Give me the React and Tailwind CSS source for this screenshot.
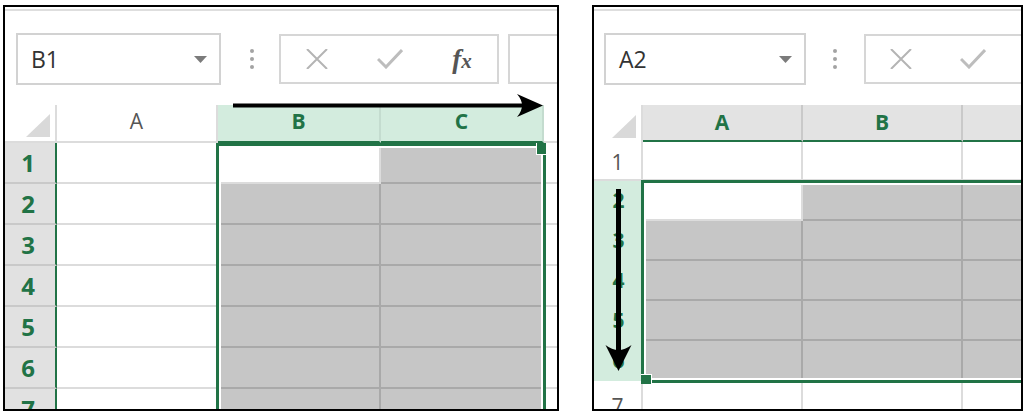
import React from 'react';

const font = { fontFamily: '"Open Sans", "Noto Sans", "Liberation Sans", sans-serif' };

function NameBox({ label, className }) {
  return (
    <div className={`flex h-[52px] shrink-0 items-center justify-between border-2 border-[#d2d2d2] bg-white pl-[13px] pr-[12px] ${className}`}>
      <span className="text-[23px] leading-none text-[#333]">{label}</span>
      <svg width="13" height="7" viewBox="0 0 13 7">
        <path d="M0 0 L13 0 L6.5 7 Z" fill="#7b7b7b" />
      </svg>
    </div>
  );
}

function Dots({ className }) {
  return (
    <div className={`flex shrink-0 flex-col gap-[4px] ${className}`}>
      <div className="h-[4px] w-[4px] rounded-full bg-[#a3a3a3]" />
      <div className="h-[4px] w-[4px] rounded-full bg-[#a3a3a3]" />
      <div className="h-[4px] w-[4px] rounded-full bg-[#a3a3a3]" />
    </div>
  );
}

function Cross() {
  return (
    <svg width="22" height="20" viewBox="0 0 22 20">
      <path d="M1 0 L21 20 M21 0 L1 20" stroke="#b4b4b4" strokeWidth="2" fill="none" />
    </svg>
  );
}

function Check() {
  return (
    <svg width="26" height="20" viewBox="0 0 26 20">
      <path d="M1 10 L9 18 L25 1" stroke="#bdbdbd" strokeWidth="3" fill="none" />
    </svg>
  );
}

function Triangle({ className }) {
  return (
    <svg className={`absolute ${className}`} width="24" height="23" viewBox="0 0 24 23">
      <path d="M24 0 L24 23 L0 23 Z" fill="#d9d9d9" />
    </svg>
  );
}

function LeftPanel() {
  const rows = [1, 2, 3, 4, 5, 6, 7];
  return (
    <div className="relative ml-[3px] mt-[5px] h-[406px] w-[556px] shrink-0 overflow-hidden border-2 border-black bg-white">
      <div className="mt-[2px] h-[2px] bg-[#dedede]" />

      {/* formula bar */}
      <div className="mt-[22px] flex h-[52px] items-center">
        <NameBox label="B1" className="ml-[11px] w-[205px]" />
        <Dots className="ml-[29px]" />
        <div className="ml-[25px] flex h-[50px] w-[220px] shrink-0 items-center border-2 border-[#d6d6d6]">
          <div className="flex w-[72px] justify-center"><Cross /></div>
          <div className="flex w-[74px] justify-center"><Check /></div>
          <div className="flex w-[70px] justify-center">
            <span className="text-[27px] font-bold italic leading-none text-[#555]" style={{ fontFamily: '"Liberation Serif", serif' }}>
              f<span className="text-[21px]">x</span>
            </span>
          </div>
        </div>
        <div className="ml-[9px] h-[50px] w-[200px] shrink-0 border-2 border-[#d6d6d6]" />
      </div>

      {/* grid */}
      <div className="relative mt-[20px]">
        <div className="grid grid-cols-[52px_161px_163px_163px_1fr]">
          <div className="relative h-[38px] border-b-2 border-r-2 border-[#dcdcdc] bg-white">
            <Triangle className="bottom-[4px] right-[5px]" />
          </div>
          <div className="flex h-[38px] items-center justify-center border-b-2 border-r-2 border-[#dcdcdc] bg-white pb-[2px] text-[21px] text-[#555]">A</div>
          <div className="flex h-[38px] items-center justify-center border-b-2 border-r-2 border-b-[#217346] border-r-[#c4dccf] bg-[#d3ecde] pb-[2px] text-[21px] font-bold text-[#217346]">B</div>
          <div className="flex h-[38px] items-center justify-center border-b-2 border-r-2 border-b-[#217346] border-r-[#c4dccf] bg-[#d3ecde] pb-[2px] text-[21px] font-bold text-[#217346]">C</div>
          <div className="h-[38px] border-b-2 border-[#dcdcdc] bg-white" />

          {rows.map((r) => (
            <React.Fragment key={r}>
              <div className="flex h-[41px] items-center justify-center border-b-2 border-r-2 border-b-[#c9c9c9] border-r-[#217346] bg-[#e1e1e1] pr-[4px] text-[24px] font-bold text-[#217346]">{r}</div>
              <div className="h-[41px] border-b-2 border-r-2 border-[#dcdcdc] bg-white" />
              <div className={`h-[41px] border-b-2 border-r-2 ${r === 1 ? 'border-[#dcdcdc] bg-white' : 'border-[#a9a9a9] bg-[#c6c6c6]'}`} />
              <div className="h-[41px] border-b-2 border-r-2 border-[#a9a9a9] bg-[#c6c6c6]" />
              <div className="h-[41px] border-b-2 border-[#dcdcdc] bg-white" />
            </React.Fragment>
          ))}
        </div>

        {/* selection */}
        <div className="absolute left-[211px] top-[38px] h-[300px] w-[330px] border-[3px] border-[#217346] shadow-[inset_0_0_0_2px_white]">
          <div className="absolute -right-[3px] -top-[3px] h-[12px] w-[10px] border-b border-l border-white bg-[#217346]" />
        </div>
      </div>

      {/* arrow */}
      <svg className="absolute left-[226px] top-[84px]" width="316" height="30" viewBox="0 0 316 30">
        <line x1="2" y1="14.5" x2="298" y2="14.5" stroke="black" strokeWidth="4" />
        <path d="M312 14.5 L286 3 Q296 14.5 286 26 Z" fill="black" />
      </svg>
    </div>
  );
}

function RightPanel() {
  const rows = [2, 3, 4, 5, 6];
  return (
    <div className="relative ml-[33px] mt-[5px] h-[406px] w-[431px] shrink-0 overflow-hidden border-2 border-black bg-white">
      <div className="mt-[2px] h-[2px] bg-[#dedede]" />

      {/* formula bar */}
      <div className="mt-[22px] flex h-[52px] items-center">
        <NameBox label="A2" className="ml-[10px] w-[202px]" />
        <Dots className="ml-[27px]" />
        <div className="ml-[27px] flex h-[50px] w-[220px] shrink-0 items-center border-2 border-[#d6d6d6]">
          <div className="flex w-[70px] justify-center"><Cross /></div>
          <div className="flex w-[74px] justify-center"><Check /></div>
        </div>
      </div>

      {/* grid */}
      <div className="relative mt-[20px]">
        <div className="grid grid-cols-[49px_160px_160px_1fr]">
          <div className="relative h-[37px] border-r-2 border-[#dcdcdc] bg-white">
            <Triangle className="bottom-[4px] right-[5px]" />
          </div>
          <div className="flex h-[37px] items-center justify-center border-b-2 border-r-2 border-b-[#217346] border-r-[#c9c9c9] bg-[#e3e3e3] text-[21px] font-bold text-[#217346]">A</div>
          <div className="flex h-[37px] items-center justify-center border-b-2 border-r-2 border-b-[#217346] border-r-[#c9c9c9] bg-[#e3e3e3] text-[21px] font-bold text-[#217346]">B</div>
          <div className="h-[37px] border-b-2 border-b-[#217346] bg-[#e3e3e3]" />

          {/* row 1 */}
          <div className="flex h-[39px] items-center justify-center border-b-2 border-r-2 border-[#dcdcdc] bg-white pt-[4px] text-[21px] text-[#555]">1</div>
          <div className="h-[39px] border-b-2 border-r-2 border-[#dcdcdc] bg-white" />
          <div className="h-[39px] border-b-2 border-r-2 border-[#dcdcdc] bg-white" />
          <div className="h-[39px] border-b-2 border-[#dcdcdc] bg-white" />

          {rows.map((r) => (
            <React.Fragment key={r}>
              <div className="flex h-[40px] items-center justify-center bg-[#d3ecde] text-[21px] font-bold text-[#217346]">{r}</div>
              <div className={`h-[40px] border-b-2 border-r-2 ${r === 2 ? 'border-[#dcdcdc] bg-white' : 'border-[#a9a9a9] bg-[#c6c6c6]'}`} />
              <div className="h-[40px] border-b-2 border-r-2 border-[#a9a9a9] bg-[#c6c6c6]" />
              <div className="h-[40px] border-b-2 border-[#a9a9a9] bg-[#c6c6c6]" />
            </React.Fragment>
          ))}

          {/* row 7 */}
          <div className="flex h-[40px] items-start justify-center border-r-2 border-[#dcdcdc] bg-white pt-[10px] text-[21px] text-[#555]">7</div>
          <div className="h-[40px] border-r-2 border-[#dcdcdc] bg-white" />
          <div className="h-[40px] border-r-2 border-[#dcdcdc] bg-white" />
          <div className="h-[40px] bg-white" />
        </div>

        {/* selection */}
        <div className="absolute left-[47px] top-[75px] h-[203px] w-[420px] border-[3px] border-[#217346] shadow-[inset_0_0_0_2px_white]">
          <div className="absolute -bottom-[4px] -left-[3px] h-[10px] w-[11px] border-r border-t border-white bg-[#217346]" />
        </div>
      </div>

      {/* arrow */}
      <svg className="absolute left-[8px] top-[178px]" width="34" height="190" viewBox="0 0 34 190">
        <line x1="16.5" y1="4" x2="16.5" y2="172" stroke="black" strokeWidth="5" />
        <path d="M16.5 186 L3.5 160 Q16.5 170 29.5 160 Z" fill="black" />
      </svg>
    </div>
  );
}

export default function App() {
  return (
    <div className="flex h-[414px] w-[1024px] overflow-hidden bg-white" style={font}>
      <LeftPanel />
      <RightPanel />
    </div>
  );
}
